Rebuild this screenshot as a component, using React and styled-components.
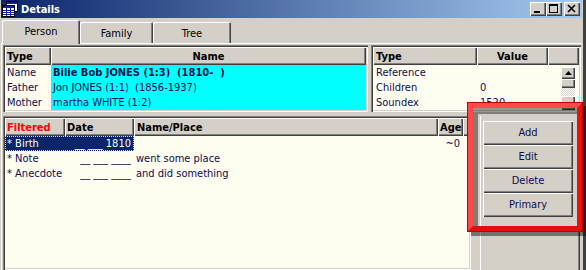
import React from 'react'
import styled, { createGlobalStyle } from 'styled-components'

const FACE = '#d4d0c8'
const CREAM = '#fffdf0'
const INK = '#0c0c4c'
const FONT = '"DejaVu Sans Condensed", "Liberation Sans", sans-serif'

const GlobalStyle = createGlobalStyle`
    html, body {
        margin: 0;
        padding: 0;
        background: ${FACE};
    }
`

const raised = `box-shadow: inset 1px 1px #fff, inset -1px -1px #404040, inset -2px -2px #808080;`

const people = [
    { type: 'Name', name: 'Bilie Bob JONES (1:3)  (1810-  )', bold: true },
    { type: 'Father', name: 'Jon JONES (1:1)  (1856-1937)' },
    { type: 'Mother', name: 'martha WHITE (1:2)' },
]

const facts = [
    { type: 'Reference', value: '' },
    { type: 'Children', value: '0' },
    { type: 'Soundex', value: '1520' },
]

const events = [
    { kind: '* Birth', date: '__ ___ 1810', place: '', age: '~0', selected: true },
    { kind: '* Note', date: '__ ___ ____', place: 'went some place', age: '' },
    { kind: '* Anecdote', date: '__ ___ ____', place: 'and did something', age: '' },
]

function TitleIcon() {
    return (
        <svg width="16" height="16" viewBox="0 0 16 16">
            <rect x="4.5" y="0.5" width="11" height="10" fill="#fff" stroke="#000" />
            <rect x="5" y="1" width="10" height="2" fill="#0a1ea8" />
            <rect x="0.5" y="4.5" width="12" height="11" fill="#fff" stroke="#000" />
            <rect x="1" y="5" width="11" height="2" fill="#0a1ea8" />
            <path d="M1 9.5h11M1 11.5h11M1 13.5h11M4.5 7v8M8.5 7v8" stroke="#0a1ea8" />
        </svg>
    )
}

function CaptionGlyph({ kind }) {
    if (kind === 'min') {
        return (
            <svg width="16" height="14" viewBox="0 0 16 14">
                <rect x="4" y="9" width="6" height="2" fill="#000" />
            </svg>
        )
    }
    if (kind === 'max') {
        return (
            <svg width="16" height="14" viewBox="0 0 16 14">
                <rect x="3.5" y="2.5" width="8" height="8" fill="none" stroke="#000" />
                <rect x="3" y="2" width="9" height="2" fill="#000" />
            </svg>
        )
    }
    return (
        <svg width="16" height="14" viewBox="0 0 16 14">
            <path d="M4 3l7 7M11 3l-7 7" stroke="#000" strokeWidth="1.6" />
        </svg>
    )
}

function App() {
    return (
        <>
            <GlobalStyle />
            <Window>
                <TitleBar>
                    <TitleIcon />
                    <TitleText>Details</TitleText>
                    <CaptionButtons>
                        <CaptionButton><CaptionGlyph kind="min" /></CaptionButton>
                        <CaptionButton><CaptionGlyph kind="max" /></CaptionButton>
                        <CaptionButton $gap><CaptionGlyph kind="close" /></CaptionButton>
                    </CaptionButtons>
                </TitleBar>

                <TabStrip>
                    <Tab $active $w={78}>Person</Tab>
                    <Tab $w={73}>Family</Tab>
                    <Tab $w={78}>Tree</Tab>
                </TabStrip>

                <Panel>
                    <TopRow>
                        <Grid $w={365}>
                            <HeaderRow>
                                <HeaderCell $w={46}>Type</HeaderCell>
                                <HeaderCell $grow $center>Name</HeaderCell>
                            </HeaderRow>
                            <Body>
                                {people.map((p) => (
                                    <Row key={p.type}>
                                        <Cell $w={46}>{p.type}</Cell>
                                        <Cell $grow $bg="#00ffff" $bold={p.bold}>{p.name}</Cell>
                                    </Row>
                                ))}
                            </Body>
                        </Grid>

                        <Grid $grow>
                            <HeaderRow>
                                <HeaderCell $w={104} $pad={3}>Type</HeaderCell>
                                <HeaderCell $w={71} $center>Value</HeaderCell>
                                <HeaderCell $grow />
                            </HeaderRow>
                            <BodySplit>
                                <Body>
                                    {facts.map((f) => (
                                        <Row key={f.type}>
                                            <Cell $w={104} $pad={3}>{f.type}</Cell>
                                            <Cell $w={71} $pad={3}>{f.value}</Cell>
                                        </Row>
                                    ))}
                                </Body>
                                <ScrollBar>
                                    <ScrollArrow>
                                        <svg width="7" height="4" viewBox="0 0 7 4">
                                            <path d="M3.5 0L7 4H0z" fill="#000" />
                                        </svg>
                                    </ScrollArrow>
                                    <ScrollThumb />
                                    <ScrollTrack />
                                    <ScrollArrow $tall />
                                </ScrollBar>
                            </BodySplit>
                        </Grid>
                    </TopRow>

                    <BottomRow>
                        <Grid $w={468}>
                            <HeaderRow>
                                <HeaderCell $w={60} $color="#ff0000">Filtered</HeaderCell>
                                <HeaderCell $w={69}>Date</HeaderCell>
                                <HeaderCell $w={304} $pad={3}>Name/Place</HeaderCell>
                                <HeaderCell $w={25}>Age</HeaderCell>
                                <HeaderCell $grow />
                            </HeaderRow>
                            <Body>
                                {events.map((e) => (
                                    <Row key={e.kind}>
                                        <Selection $on={e.selected}>
                                            <Cell $w={60}>{e.kind}</Cell>
                                            <Cell $w={69} $right>{e.date}</Cell>
                                        </Selection>
                                        <Cell $w={304}>{e.place}</Cell>
                                        <Cell $w={25} $right>{e.age}</Cell>
                                    </Row>
                                ))}
                            </Body>
                        </Grid>

                        <ButtonPanel>
                            <ActionButton>Add</ActionButton>
                            <ActionButton>Edit</ActionButton>
                            <ActionButton>Delete</ActionButton>
                            <ActionButton>Primary</ActionButton>
                        </ButtonPanel>
                    </BottomRow>
                </Panel>

                <Highlight />
            </Window>
        </>
    )
}

const Window = styled.div`
    position: relative;
    width: 586px;
    height: 270px;
    overflow: hidden;
    box-sizing: border-box;
    display: flex;
    flex-direction: column;
    padding: 0 4px 0 1px;
    background: ${FACE};
    box-shadow: inset -3px 0 #404040;
    font-family: ${FONT};
    font-size: 11px;
    color: ${INK};
`

const TitleBar = styled.div`
    height: 18px;
    flex: none;
    display: flex;
    align-items: center;
    gap: 3px;
    padding: 0 2px 0 1px;
    background: linear-gradient(to right, #0a246a, #a6caf0);
`

const TitleText = styled.span`
    color: #fff;
    font-weight: bold;
    font-size: 11px;
`

const CaptionButtons = styled.div`
    margin-left: auto;
    display: flex;
`

const CaptionButton = styled.div`
    width: 16px;
    height: 14px;
    margin-left: ${(p) => (p.$gap ? '2px' : '0')};
    background: ${FACE};
    box-shadow: inset 1px 1px #fff, inset -1px -1px #404040, inset -2px -2px #808080;
    display: flex;
`

const TabStrip = styled.div`
    height: 25px;
    flex: none;
    display: flex;
    align-items: flex-end;
    padding-left: 1px;
`

const Tab = styled.div`
    position: relative;
    z-index: 1;
    width: ${(p) => p.$w}px;
    height: ${(p) => (p.$active ? '24px' : '21px')};
    margin-bottom: ${(p) => (p.$active ? '-1px' : '0')};
    box-sizing: border-box;
    display: flex;
    align-items: center;
    justify-content: center;
    padding-top: ${(p) => (p.$active ? '0' : '2px')};
    padding-bottom: ${(p) => (p.$active ? '1px' : '0')};
    background: ${FACE};
    color: #000;
    border-radius: 2px 2px 0 0;
    box-shadow: inset 1px 1px #fff, inset -1px 0 #404040, inset -2px 0 #808080;
`

const Panel = styled.div`
    flex: 1;
    display: flex;
    flex-direction: column;
    min-height: 0;
    border-top: 1px solid #fff;
    border-left: 1px solid #fff;
    padding: 1px 1px 0 1px;
`

const TopRow = styled.div`
    display: flex;
    gap: 3px;
    height: 67px;
    flex: none;
`

const BottomRow = styled.div`
    display: flex;
    flex: 1;
    margin-top: 4px;
    min-height: 0;
    gap: 9px;
`

const Grid = styled.div`
    ${(p) => (p.$grow ? 'flex: 1;' : `width: ${p.$w}px; flex: none;`)}
    box-sizing: border-box;
    padding: 2px;
    display: flex;
    flex-direction: column;
    background: ${CREAM};
    box-shadow: inset 1px 1px #808080, inset 2px 2px #404040, inset -1px -1px #fff, inset -2px -2px ${FACE};
`

const HeaderRow = styled.div`
    display: flex;
    height: 18px;
    flex: none;
    background: ${FACE};
`

const HeaderCell = styled.div`
    ${(p) => (p.$grow ? 'flex: 1;' : `width: ${p.$w}px; flex: none;`)}
    box-sizing: border-box;
    display: flex;
    align-items: center;
    justify-content: ${(p) => (p.$center ? 'center' : 'flex-start')};
    padding-left: ${(p) => (p.$center ? 0 : p.$pad || 2)}px;
    font-weight: bold;
    color: ${(p) => p.$color || '#000'};
    white-space: nowrap;
    overflow: hidden;
    ${raised}
`

const Body = styled.div`
    flex: 1;
    display: flex;
    flex-direction: column;
    background: ${CREAM};
`

const BodySplit = styled.div`
    flex: 1;
    display: flex;
`

const Row = styled.div`
    display: flex;
    height: 15px;
    flex: none;
`

const Cell = styled.div`
    ${(p) => (p.$grow ? 'flex: 1;' : `width: ${p.$w}px; flex: none;`)}
    box-sizing: border-box;
    display: flex;
    align-items: center;
    justify-content: ${(p) => (p.$right ? 'flex-end' : 'flex-start')};
    padding: 0 ${(p) => (p.$right ? 3 : 0)}px 0 ${(p) => (p.$right ? 0 : p.$pad || 2)}px;
    background: ${(p) => p.$bg || 'transparent'};
    font-weight: ${(p) => (p.$bold ? 'bold' : 'normal')};
    white-space: pre;
    overflow: hidden;
`

const Selection = styled.div`
    display: flex;
    background: ${(p) => (p.$on ? '#0a246a' : 'transparent')};
    color: ${(p) => (p.$on ? '#fff' : 'inherit')};
    outline: ${(p) => (p.$on ? '1px dotted #e8e4b0' : 'none')};
    outline-offset: -1px;
`

const ScrollBar = styled.div`
    width: 14px;
    margin: 2px 4px 0 0;
    display: flex;
    flex-direction: column;
`

const ScrollArrow = styled.div`
    height: ${(p) => (p.$tall ? 14 : 12)}px;
    flex: none;
    display: flex;
    align-items: center;
    justify-content: center;
    background: ${FACE};
    box-shadow: inset 1px 1px #fff, inset -1px -1px #404040, inset -2px -2px #808080;
`

const ScrollThumb = styled.div`
    height: 9px;
    flex: none;
    background: ${FACE};
    box-shadow: inset 1px 1px #fff, inset -1px -1px #404040, inset -2px -2px #808080;
`

const ScrollTrack = styled.div`
    height: 8px;
    flex: none;
    background: repeating-conic-gradient(${FACE} 0 25%, #fff 0 50%) 0 0 / 2px 2px;
`

const ButtonPanel = styled.div`
    width: 100px;
    flex: none;
    box-sizing: border-box;
    padding: 5px 0 0 3px;
    display: flex;
    flex-direction: column;
    box-shadow: inset 1px 0 #fff, inset -1px 0 #404040, inset -2px 0 #808080;
`

const ActionButton = styled.div`
    width: 90px;
    height: 24px;
    box-sizing: border-box;
    display: flex;
    align-items: center;
    justify-content: center;
    padding-bottom: 1px;
    background: ${FACE};
    color: ${INK};
    ${raised}
`

const Highlight = styled.div`
    position: absolute;
    left: 468px;
    top: 103px;
    width: 114px;
    height: 128px;
    box-sizing: border-box;
    border: 5px solid #ff2020;
    border-color: #ff4848 #e81010 #e01010 #ff4848;
    outline: 1px solid #c00000;
    box-shadow: 4px 4px 0 1px rgba(0, 0, 0, 0.45), inset 5px 6px 0 rgba(0, 0, 0, 0.4);
    pointer-events: none;
`

export default App
